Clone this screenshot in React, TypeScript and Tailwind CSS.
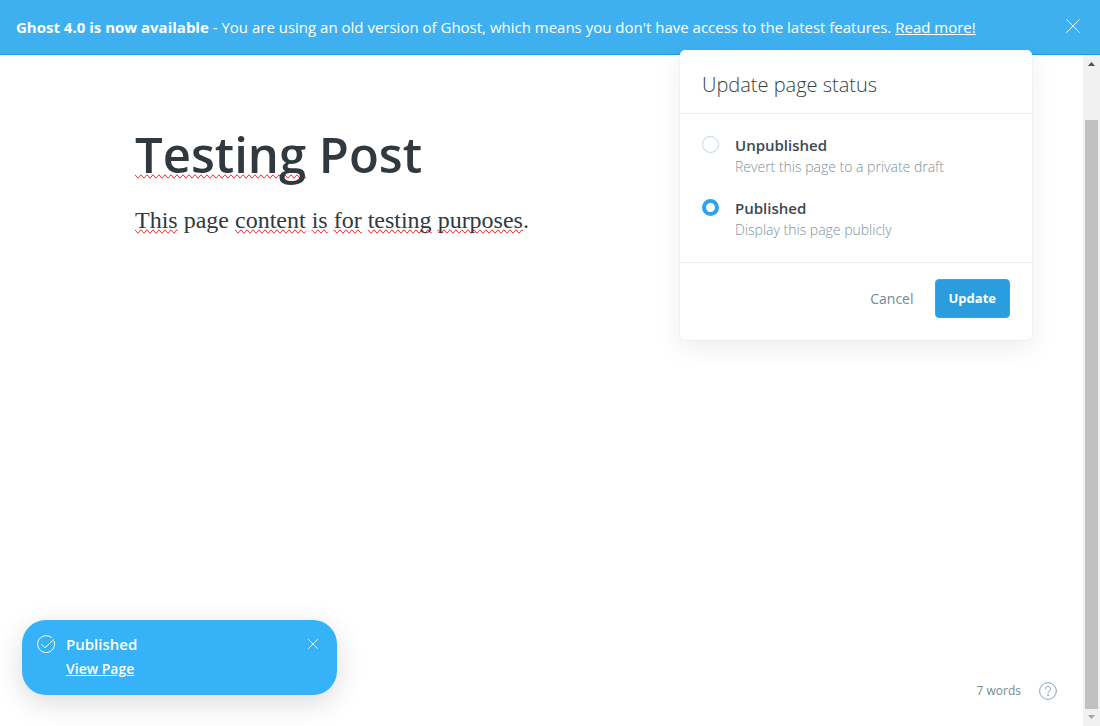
import { useState } from "react";
import type { ReactNode } from "react";

type Status = "unpublished" | "published";

const options: { value: Status; label: string; hint: string }[] = [
  { value: "unpublished", label: "Unpublished", hint: "Revert this page to a private draft" },
  { value: "published", label: "Published", hint: "Display this page publicly" },
];

function CloseIcon({ className }: { className: string }) {
  return (
    <svg viewBox="0 0 14 14" className={className} fill="none" stroke="currentColor" strokeLinecap="round" aria-hidden="true">
      <path d="M0.7 0.7 13.3 13.3M13.3 0.7 0.7 13.3" />
    </svg>
  );
}

function Misspelled({ children }: { children: ReactNode }) {
  return <span className="[text-decoration-line:spelling-error]">{children}</span>;
}

function Banner() {
  return (
    <header className="flex h-[55px] shrink-0 items-center justify-between border-b border-[#1a9be3] bg-[#3eb0ef] px-4 text-[15px] text-white">
      <p>
        <b className="font-bold">Ghost 4.0 is now available</b> - You are using an old version of Ghost, which means you
        don't have access to the latest features.{" "}
        <a href="#upgrade" className="underline">
          Read more!
        </a>
      </p>
      <button type="button" aria-label="Dismiss" className="px-1 pb-0.5">
        <CloseIcon className="size-[14px]" />
      </button>
    </header>
  );
}

function StatusDialog() {
  const [status, setStatus] = useState<Status>("published");
  return (
    <form
      aria-labelledby="status-title"
      className="absolute top-[50px] right-[68px] w-[352px] rounded-[5px] bg-white shadow-[0_0_0_1px_rgba(99,114,130,0.06),0_8px_26px_rgba(27,39,51,0.08)]"
    >
      <h2 id="status-title" className="border-b border-[#e3eef5] px-[22px] pt-[21px] pb-[14px] text-xl leading-7 font-light text-[#343f44]">
        Update page status
      </h2>
      <div className="flex flex-col gap-5 px-[22px] pt-[22px] pb-5">
        {options.map(({ value, label, hint }) => (
          <label key={value} className="flex items-start gap-4">
            <input
              type="radio"
              name="status"
              value={value}
              checked={status === value}
              onChange={() => setStatus(value)}
              className="size-[17px] shrink-0 appearance-none rounded-full border border-[#b9d6e8] bg-white checked:border-4 checked:border-[#2fa3e7]"
            />
            <span className="flex flex-col">
              <span className="text-[15px] leading-[19px] font-semibold text-[#3c484f]">{label}</span>
              <span className="text-sm leading-6 font-light text-[#7d929e]">{hint}</span>
            </span>
          </label>
        ))}
      </div>
      <div className="flex items-center justify-end gap-[21px] border-t border-[#e3eef5] px-[22px] pt-4 pb-[22px] text-sm">
        <button type="button" className="text-[#738a94]">
          Cancel
        </button>
        <button type="submit" className="h-[39px] rounded-[4px] border border-[#33a7e9] bg-[#2a9ddf] px-[13px] text-[13px] font-bold text-white">
          Update
        </button>
      </div>
    </form>
  );
}

function Toast() {
  return (
    <aside className="absolute bottom-[31px] left-[22px] flex h-[75px] w-[315px] items-start rounded-3xl bg-[#36b2f9] px-[15px] pt-[14px] text-white shadow-[0_8px_28px_rgba(0,0,0,0.14)]">
      <svg viewBox="0 0 18 18" className="mt-px size-[18px] shrink-0" fill="none" stroke="currentColor" strokeLinecap="round" strokeLinejoin="round" aria-hidden="true">
        <path d="M17.2 6.4A8.5 8.5 0 1 1 14.4 2.4" />
        <path d="M4.6 9.3 8 12.7 16.8 4.6" />
      </svg>
      <div className="ml-[11px] flex flex-1 flex-col gap-1">
        <span className="text-[15px] leading-5 font-semibold">Published</span>
        <a href="#page" className="text-sm leading-[22px] font-semibold underline">
          View Page
        </a>
      </div>
      <button type="button" aria-label="Close" className="p-1">
        <CloseIcon className="mt-px size-[10px] stroke-[1.3]" />
      </button>
    </aside>
  );
}

function Scrollbar() {
  return (
    <div aria-hidden="true" className="flex w-[17px] shrink-0 flex-col items-center bg-[#f1f1f1]">
      <svg viewBox="0 0 17 17" className="size-[17px] shrink-0" fill="#505050">
        <path d="M5 11 8.5 7 12 11Z" />
      </svg>
      <div className="mt-12 w-[13px] flex-1 bg-[#c1c1c1]" />
      <svg viewBox="0 0 17 17" className="size-[17px] shrink-0" fill="#a3a3a3">
        <path d="M5 6 12 6 8.5 10Z" />
      </svg>
    </div>
  );
}

export default function App() {
  return (
    <div className="relative flex min-h-screen flex-col bg-white font-['Open_Sans','Noto_Sans',sans-serif]">
      <Banner />
      <div className="flex flex-1">
        <main className="flex flex-1 flex-col">
          <article className="flex-1 px-[135px] pt-[63px] text-[#2f393f]">
            <h1 className="text-[49px] leading-[72px] font-semibold">
              <Misspelled>Testing</Misspelled> Post
            </h1>
            <p className="mt-3 font-['Liberation_Serif',serif] text-2xl leading-9">
              <Misspelled>This</Misspelled> page <Misspelled>content</Misspelled> <Misspelled>is</Misspelled>{" "}
              <Misspelled>for</Misspelled> <Misspelled>testing</Misspelled> <Misspelled>purposes</Misspelled>.
            </p>
          </article>
          <footer className="flex items-center justify-end gap-[18px] pr-[26px] pb-[26px] text-xs text-[#738a94]">
            <span>7 words</span>
            <button type="button" aria-label="Help">
              <svg viewBox="0 0 18 18" className="size-[18px]" fill="none" stroke="#8fa3ae" strokeLinecap="round" strokeLinejoin="round" aria-hidden="true">
                <circle cx="9" cy="9" r="8.4" />
                <path d="M6.5 7a2.5 2.5 0 1 1 3.4 2.3c-.6.3-.9.7-.9 1.3v.6" />
                <circle cx="9" cy="13.3" r="0.4" fill="#8fa3ae" />
              </svg>
            </button>
          </footer>
        </main>
        <Scrollbar />
      </div>
      <StatusDialog />
      <Toast />
    </div>
  );
}
